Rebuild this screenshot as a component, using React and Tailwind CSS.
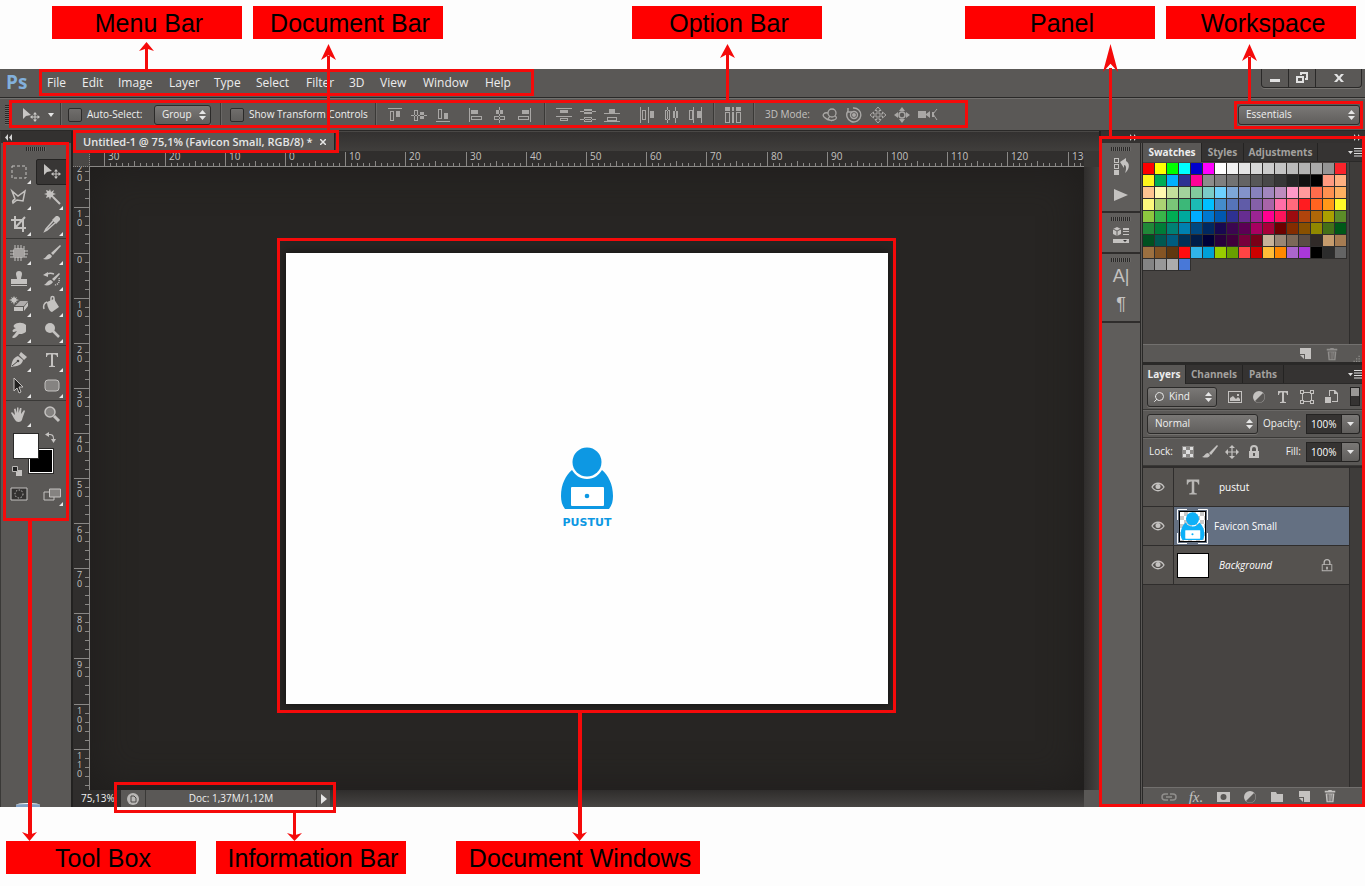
// src/App.jsx

import { clsx } from 'clsx';
import { Search } from 'lucide-react';

const MENUS = ['File', 'Edit', 'Image', 'Layer', 'Type', 'Select', 'Filter', '3D', 'View', 'Window', 'Help'];

const MENU_WIDTHS = {
  File: 'w-[35px]',
  Edit: 'w-[36px]',
  Image: 'w-[51px]',
  Layer: 'w-[45px]',
  Type: 'w-[42px]',
  Select: 'w-[50px]',
  Filter: 'w-[43px]',
  '3D': 'w-[31px]',
  View: 'w-[43px]',
  Window: 'w-[62px]',
  Help: 'w-[26px]',
};

const SWATCHES = [
  'ff0000 ffff00 00ff00 00ffff 0000cc ff00ff ffffff f2f2f2 e4e4e4 d8d8d8 cccccc c4c4c4 bbbbbb b2b2b2 aaaaaa 949494 fa232b',
  'fff51c 00ad56 00b0ff 2e3192 ff0096 8c8c8c 7f7f7f 727272 646464 575757 484848 373737 262626 111111 000000 ff9a80 ffb080',
  'ffc490 fff8b0 c4df9b a3d39c 82ca9c 7accc8 6dd0ff 7da7d9 8393ca 8781bd a186be bd8cbf ff9ac8 ff9a9c ff6c4c ff9050 ffb060',
  'fff87c acd373 7ac678 3cb878 1cbbb4 00c0ff 448ccb 5674b9 605ca8 8560a8 a864a8 ff6ea8 ff6a7c ff1c20 ff6420 ff9818 fffa28',
  '8dc73f 39b54a 00ad54 00a99d 00acff 0078d0 0058b0 2e3192 662d91 9c2492 ff0090 ff145c 9e0b0f b0440c b06808 aba000 5c8c28',
  '208838 007c38 008074 0080b0 004880 002860 180850 3c0650 5c0054 a80060 a80038 6c0000 842c00 885000 908800 447018 005818',
  '005020 005850 005c80 003058 001c48 000038 28003c 40003c 78003c 780018 c7b299 998675 7c6858 5a4c44 302a28 c69c6d a67c52',
  '9c7040 845424 603810 ff0c10 30b4e8 00a0d8 98cc00 68a000 ff4444 cc0000 ffbc38 ff8800 aa66cc aa38d8 000000 2c2c2c 646464',
  '848484 989898 acacac 4878d8',
].map((row) => row.split(' '));

function Icon({ size = 'size-4', box = 16, className, children }) {
  return (
    <svg
      viewBox={`0 0 ${box} ${box}`}
      className={clsx('shrink-0', size, className)}
      fill="currentColor"
      aria-hidden="true"
    >
      {children}
    </svg>
  );
}

/* ---------- callouts ---------- */

function Callout({ className, children }) {
  return (
    <div
      className={clsx(
        "h-[33px] shrink-0 bg-[#ff0000] pl-1 text-center font-['Liberation_Sans',Arial,sans-serif] text-[25px] leading-[34px] whitespace-nowrap text-black",
        className,
      )}
    >
      {children}
    </div>
  );
}

function Frame({ className }) {
  return <div className={clsx('pointer-events-none absolute z-20 border-3 border-[#f50a0a]', className)} />;
}

function Arrow({ className, head = 'h-3', line = 'w-[3px]', down = false }) {
  return (
    <div className={clsx('pointer-events-none absolute z-30 flex w-[15px] items-center', down ? 'flex-col-reverse' : 'flex-col', className)}>
      <svg viewBox="0 0 15 12" preserveAspectRatio="none" className={clsx('w-full shrink-0', head, down && 'rotate-180')}>
        <path d="M7.500 0 15 12 7.500 8.500 0 12Z" fill="#f50a0a" />
      </svg>
      <div className={clsx('grow bg-[#f50a0a]', down ? '-mb-1' : '-mt-1', line)} />
    </div>
  );
}

/* ---------- small controls ---------- */

function UpDown({ className }) {
  return (
    <svg viewBox="0 0 7 10" className={clsx('pointer-events-none absolute h-[10px] w-[7px]', className)} fill="#e6e6e6" aria-hidden="true">
      <path d="M3.500 0 7 4H0ZM3.500 10 0 6h7Z" />
    </svg>
  );
}

function Dropdown({ label, value, className, selectClass = 'pl-[7px]', children }) {
  return (
    <div className={clsx('relative h-5 shrink-0', className)}>
      {children}
      <select
        aria-label={label}
        defaultValue={value}
        className={clsx(
          'h-full w-full appearance-none rounded-[3px] border border-[#2b2a29] bg-linear-to-b from-[#7a7876] to-[#605e5c] text-[10px] text-[#f0f0f0] shadow-[0_1px_0_#74726f]',
          selectClass,
        )}
      >
        <option>{value}</option>
      </select>
      <UpDown className="top-[5px] right-[5px]" />
    </div>
  );
}

function Check({ id, children, className }) {
  return (
    <div className={clsx('flex shrink-0 items-center gap-[5px]', className)}>
      <input
        id={id}
        type="checkbox"
        className="size-[14px] shrink-0 appearance-none rounded-[2px] border border-[#2b2a29] bg-linear-to-b from-[#706e6c] to-[#605e5c]"
      />
      <label htmlFor={id} className="whitespace-nowrap">{children}</label>
    </div>
  );
}

function Grip({ className }) {
  return (
    <div
      className={clsx(
        'h-[4px] w-[20px] bg-[repeating-linear-gradient(to_right,#2a2928_0_1px,#6b6967_1px_2px)]',
        className,
      )}
    />
  );
}

function PercentField({ id, label }) {
  return (
    <div className="ml-auto flex items-center">
      <label htmlFor={id}>{label}</label>
      <input
        id={id}
        defaultValue="100%"
        className="ml-[5px] h-5 w-[36px] border border-[#242322] bg-[#353332] pl-1 text-[10px] text-white"
      />
      <button
        type="button"
        aria-label={`${label} slider`}
        className="flex h-5 w-[18px] items-center justify-center rounded-r-[3px] border border-l-0 border-[#242322] bg-linear-to-b from-[#7a7876] to-[#605e5c]"
      >
        <Icon size="size-[7px]" box={7} className="text-[#e6e6e6]"><path d="M0 2h7L3.500 6Z" /></Icon>
      </button>
    </div>
  );
}

/* ---------- top bars ---------- */

function MenuBar() {
  return (
    <header className="relative flex h-[29px] shrink-0 items-start border-b border-[#2a2928] bg-[#5a5856]">
      <span className="w-[47px] pl-[6px] text-[19px] leading-[26px] font-bold text-[#82b0dc]">Ps</span>
      <nav className="flex text-xs leading-[28px] text-[#ededed]">
        {MENUS.map((m) => (
          <button key={m} type="button" className={clsx('text-left whitespace-nowrap', MENU_WIDTHS[m])}>{m}</button>
        ))}
      </nav>
      <div className="mr-[3px] ml-auto flex h-[19px] overflow-hidden rounded-b-[4px] border border-t-0 border-[#2a2928] text-[#e2e2e2] shadow-[0_1px_0_#777572]">
        <button type="button" aria-label="Minimize" className="flex w-[27px] items-center justify-center border-r border-[#2a2928]">
          <Icon size="size-3" box={12}><path d="M1 7h10v3H1Z" /></Icon>
        </button>
        <button type="button" aria-label="Restore" className="flex w-[27px] items-center justify-center border-r border-[#2a2928]">
          <Icon size="size-3" box={12}>
            <path fillRule="evenodd" d="M4 0h8v8H9V6h1V2H6v1H4ZM0 4h8v7H0Zm2 2v3h4V6Z" />
          </Icon>
        </button>
        <button type="button" aria-label="Close" className="flex w-[45px] items-center justify-center">
          <Icon size="size-3" box={12}><path d="M1 2h3l2 2.500L8 2h3L7.500 6l3.500 4H8L6 7.500 4 10H1l3.500-4Z" /></Icon>
        </button>
      </div>
      <Frame className="top-0 left-[39px] h-[27px] w-[495px]" />
      <Arrow className="-top-[27px] left-[139px] h-[29px]" head="h-[9px]" />
    </header>
  );
}

const ALIGN = [
  [
    'M1 1h14v1H1ZM3 4h4v10H3Zm1 1v8h2V5ZM9 4h4v6H9Z',
    'M0 8h16v1H0ZM3 3h4v11H3Zm1 1v9h2V4ZM9 5h4v7H9Z',
    'M1 14h14v1H1ZM3 2h4v10H3Zm1 1v8h2V3ZM9 6h4v6H9Z',
  ],
  [
    'M1 1h1v14H1ZM3 3h7v4H3ZM3 9h11v4H3Zm1 1v2h9v-2Z',
    'M7 0h1v16H7ZM4 3h7v4H4ZM2 9h11v4H2Zm1 1v2h9v-2Z',
    'M14 1h1v14h-1ZM6 3h7v4H6ZM2 9h11v4H2Zm1 1v2h9v-2Z',
  ],
  [
    'M0 1h16v1H0ZM4 3h8v3H4ZM0 9h16v1H0ZM4 11h8v3H4Zm1 1v1h6v-1Z',
    'M0 4h16v1H0ZM4 2h8v5H4ZM0 12h16v1H0ZM4 10h8v5H4Zm1 1v3h6v-3Z',
    'M0 6h16v1H0ZM5 2h6v4H5ZM0 14h16v1H0ZM3 10h10v4H3Zm1 1v2h8v-2Z',
  ],
  [
    'M1 0h1v16H1ZM3 3h4v10H3Zm1 1v8h2V4ZM9 0h1v16H9ZM11 4h4v7h-4Z',
    'M4 0h1v16H4ZM2 3h5v10H2Zm1 1v8h3V4ZM12 0h1v16h-1ZM10 4h5v7h-5Z',
    'M6 0h1v16H6ZM2 3h4v10H2Zm1 1v8h2V4ZM14 0h1v16h-1ZM10 4h4v7h-4Z',
  ],
];

function AlignGroup({ paths }) {
  return (
    <div className="flex gap-2">
      {paths.map((d) => <Icon key={d}><path fillRule="evenodd" d={d} /></Icon>)}
    </div>
  );
}

function Sep({ className }) {
  return <span className={clsx('h-[27px] w-[2px] shrink-0 border-l border-[#3a3937] bg-[#6a6866]', className)} />;
}

function MovePath({ x = 0, y = 0 }) {
  return (
    <path
      transform={`translate(${x} ${y})`}
      d="M5 0 7 2.500H5.500v2h2V3L10 5 7.500 7V5.500h-2v2H7L5 10 3 7.500h1.500v-2h-2V7L0 5l2.500-2v1.500h2v-2H3Z"
    />
  );
}

function OptionBar() {
  return (
    <div className="relative flex h-[33px] shrink-0 items-center border-t border-b border-t-[#72706e] border-b-[#2a2928] bg-[#5a5856] text-[10px] text-[#f0f0f0]">
      <div className="ml-[5px] h-[20px] w-[4px] shrink-0 bg-[repeating-linear-gradient(to_bottom,#2a2928_0_1px,#6b6967_1px_2px)]" />
      <button type="button" aria-label="Move tool presets" className="ml-3 flex shrink-0 items-center gap-1 text-[#c9c7c5]">
        <svg viewBox="0 0 20 16" className="h-4 w-5" fill="currentColor" aria-hidden="true">
          <path d="M2 1v11l3-3 5-1Z" />
          <MovePath x={9} y={5} />
        </svg>
        <Icon size="size-3" box={12} className="text-[#e6e6e6]"><path d="M3 4h6L6 8Z" /></Icon>
      </button>
      <Sep className="ml-[3px]" />
      <Check id="auto-select" className="ml-[6px] w-[86px]">Auto-Select:</Check>
      <Dropdown label="Auto-select target" value="Group" className="w-[57px]" />
      <Sep className="ml-[9px]" />
      <Check id="transform-controls" className="ml-2 w-[137px]">Show Transform Controls</Check>
      <Sep className="ml-2" />
      <div className="ml-[10px] flex w-[145px] justify-between text-[#a9a7a5]">
        <AlignGroup paths={ALIGN[0]} />
        <AlignGroup paths={ALIGN[1]} />
      </div>
      <Sep className="ml-3" />
      <div className="ml-[10px] flex w-[147px] justify-between text-[#a9a7a5]">
        <AlignGroup paths={ALIGN[2]} />
        <AlignGroup paths={ALIGN[3]} />
      </div>
      <Sep className="ml-[10px]" />
      <Icon className="ml-[10px] text-[#a9a7a5]">
        <path fillRule="evenodd" d="M0 0h5v4H0ZM7 0h2v4H7ZM11 0h5v4h-5ZM0 5h5v11H0Zm1 1v9h3V6ZM7 5h2v11H7ZM11 5h5v11h-5Zm1 1v9h3V6Z" />
      </Icon>
      <Sep className="ml-3" />
      <span className="ml-[10px] w-[57px] whitespace-nowrap text-[#c4c2c0]">3D Mode:</span>
      <div className="flex gap-2 text-[#a9a7a5]">
        <Icon><g fill="none" stroke="currentColor" strokeWidth="1.3"><circle cx="10" cy="6" r="4" /><path d="M6 6C2 5 0 8 2 10s6 4 10 3c3-1 3-3 1-4M8 9l-2 3 4 2" /></g></Icon>
        <Icon><g fill="none" stroke="currentColor" strokeWidth="1.4"><path d="M2 4a7 7 0 1 0 5-3M2 1v4h4" /><circle cx="8" cy="8" r="3.500" /></g><circle cx="8" cy="8" r="2" /></Icon>
        <Icon><path fill="none" stroke="currentColor" d="m8 0 3 3.500H9V7h3.500V5L16 8l-3.500 3V9H9v3.500h2L8 16l-3-3.500h2V9H3.500v2L0 8l3.500-3v2H7V3.500H5Z" /></Icon>
        <Icon><circle cx="8" cy="8" r="3" fill="none" stroke="currentColor" strokeWidth="1.500" /><path d="m8 0 3 4H5ZM8 16l3-4H5ZM0 8l4-3v6ZM16 8l-4-3v6Z" /></Icon>
        <svg viewBox="0 0 20 16" className="h-4 w-5" fill="currentColor" aria-hidden="true">
          <path d="M0 4h8v7H0ZM8 7l4-3v7L8 8Z" /><path d="M19 2l-4 5 4 6" fill="none" stroke="currentColor" /><path d="M14 5h2v5h-2Z" />
        </svg>
      </div>
      <div className="grow" />
      <Dropdown label="Workspace" value="Essentials" className="mr-[5px] w-[122px]" />
      <Frame className="top-px left-[9px] h-[28px] w-[959px]" />
      <Frame className="top-[2px] right-[2px] h-[28px] w-[129px]" />
      <Arrow className="-top-[55px] left-[720px] h-[58px]" head="h-[14px]" />
      <Arrow className="-top-[55px] right-[108px] h-[58px]" head="h-[17px]" />
    </div>
  );
}

/* ---------- tool box ---------- */

const TOOL_GROUPS = [
  [
    { name: 'Rectangular Marquee', art: <path d="M3 4h14v12H3Z" fill="none" stroke="currentColor" strokeDasharray="3 2" /> },
    { name: 'Move', active: true, noFlyout: true, art: <><path d="M2 2v11l3-3 5-1Z" /><MovePath x={9} y={7} /></> },
    { name: 'Polygonal Lasso', art: <path d="m3 3 6 5 7-5-2 10-6-1-4 3c-1-2 0-3 2-4Z" fill="none" stroke="currentColor" strokeWidth="1.500" /> },
    { name: 'Magic Wand', art: <><path d="m8 1 1 3 3-2-1 3 3 1-3 1 1 3-3-1-1 3-1-3-3 1 1-3-3-1 3-1-1-3 3 1Z" /><path d="m11 9 7 7" fill="none" stroke="currentColor" strokeWidth="2" /></> },
    { name: 'Crop', art: <path d="M6 2v12h11M2 6h12v12M6 14 16 3" fill="none" stroke="currentColor" strokeWidth="2" /> },
    { name: 'Eyedropper', art: <><path d="m10 6 4-4h2l2 2v2l-4 4Z" /><path d="m11 7-7 8-1 2 2-1 8-7" fill="none" stroke="currentColor" strokeWidth="1.500" /></> },
  ],
  [
    { name: 'Patch', art: <><rect x="4" y="5" width="12" height="10" rx="3" opacity=".7" /><path d="M6 2v4m3-4v4m3-4v4m3-3v3M6 14v4m3-4v4m3-4v4M1 8h4m-4 3h4m-4 3h4M15 8h4m-4 3h4m-4 3h3" stroke="currentColor" /></> },
    { name: 'Brush', art: <><path d="M18 2 9 10l2 2 8-9Z" /><path d="M8 11c-3 0-3 3-7 5 4 1 8 0 9-3Z" /></> },
    { name: 'Clone Stamp', art: <path d="M10 2a3 3 0 0 1 3 3c0 2-1 3-1 5h6v5H2v-5h6c0-2-1-3-1-5a3 3 0 0 1 3-3ZM2 16h16v1H2Z" /> },
    { name: 'History Brush', art: <><path d="m17 4-7 6 2 2 6-7ZM9 11c-3 0-4 3-7 5 4 1 7 0 9-3Z" /><path d="M3 6c3-2 6-2 9-1" fill="none" stroke="currentColor" strokeWidth="1.500" /><path d="m1 6 5-3v5Z" /><path d="M17 9c1 4-1 7-5 7" fill="none" stroke="currentColor" strokeDasharray="1 1" strokeWidth="1.500" /></> },
    { name: 'Background Eraser', art: <><path d="m5 1 1 2 2-1-1 2 3 1-3 1 1 2-2-1-1 3-1-3-2 1 1-2-3-1 3-1-1-2 2 1Z" /><path d="m6 11 5-5h8l-4 5Z" opacity=".8" /><path d="M5 12h9v4H5ZM15 12l4-5v4l-4 5Z" /></> },
    { name: 'Paint Bucket', art: <><path d="m5 7 7-3 5 8-7 5c-2 0-5-5-5-10Z" /><path d="M9 8V3c0-2 3-2 3 0v5M5 7c-3 1-4 4-3 7" fill="none" stroke="currentColor" strokeWidth="1.500" /></> },
    { name: 'Smudge', art: <path d="M5 4c3-3 9-3 12 0v6c0 2-3 2-4 3h-3c-2 2-3 4-6 4-1 0-1-2 1-3l3-4-3 1c-2 0-2-2 0-3l2-1C5 7 4 5 5 4Z" /> },
    { name: 'Dodge', art: <><circle cx="8" cy="7" r="5" /><path d="m11 10 6 6" stroke="currentColor" strokeWidth="2.500" /></> },
  ],
  [
    { name: 'Pen', art: <><path d="M2 17C3 11 4 8 9 6l5 4c-1 5-5 6-12 7Z" /><path d="m10 5 2-3 6 5-3 3Z" /><path d="m3 16 6-5" stroke="#4a4846" /><circle cx="9" cy="11" r="1.300" fill="#4a4846" /></> },
    { name: 'Horizontal Type', art: <path d="M4 3h12v4h-1c0-2-1-2.500-4-2.500V15c0 1 1 1 2 1v1H7v-1c1 0 2 0 2-1V4.500C6 4.500 5 5 5 7H4Z" /> },
    { name: 'Path Selection', art: <path d="M5 2v13l3-3 2 5 2-1-2-5h4Z" fill="#222120" stroke="currentColor" /> },
    { name: 'Rounded Rectangle', art: <rect x="3" y="4" width="14" height="11" rx="3" fill="#858381" stroke="currentColor" /> },
  ],
  [
    { name: 'Hand', art: <path d="m2 8 1-1 3 3L5 4l1.500-.5L8 8V2.500h1.500V8L11 3h1.500L12 9l3-4 1 1-2.500 7c-.5 3-2 4-4 4-3 0-4-3-7.500-9Z" /> },
    { name: 'Zoom', noFlyout: true, art: <><circle cx="8" cy="7" r="5" fill="#858381" stroke="currentColor" strokeWidth="1.500" /><path d="m12 11 5 5" stroke="currentColor" strokeWidth="3" /></> },
  ],
];

function Tool({ tool }) {
  return (
    <button
      type="button"
      aria-label={tool.name}
      className={clsx(
        'relative flex h-[26px] items-center justify-center text-[#c4c2c0]',
        tool.active && 'rounded-[2px] border border-[#242322] bg-[#383635]',
      )}
    >
      <Icon size="size-5" box={20}>{tool.art}</Icon>
      {!tool.noFlyout && (
        <svg viewBox="0 0 4 4" className="absolute right-[5px] bottom-px size-1" fill="#e6e6e6" aria-hidden="true"><path d="M4 0v4H0Z" /></svg>
      )}
    </button>
  );
}

function ToolBox() {
  return (
    <aside className="relative flex w-[73px] shrink-0 flex-col border-r-2 border-l border-r-[#222120] border-l-[#3a3937] bg-[#5a5856]">
      <div className="flex h-3 items-center bg-[#333130] pl-1">
        <Icon size="size-[7px]" box={7} className="text-[#d4d4d4]"><path d="M3 0v7L0 3.500ZM7 0v7L4 3.500Z" /></Icon>
      </div>
      <Grip className="mt-1 mb-[7px] ml-[25px]" />
      {TOOL_GROUPS.map((group, g) => (
        <div
          key={g}
          className={clsx('mr-[3px] ml-[2px] grid grid-cols-2 pt-px pb-px', g < TOOL_GROUPS.length - 1 && 'border-b border-[#3a3937]')}
        >
          {group.map((t) => <Tool key={t.name} tool={t} />)}
        </div>
      ))}
      <div className="relative mt-1 ml-[10px] h-[48px] w-[48px]">
        <button type="button" aria-label="Background color" className="absolute top-4 left-[18px] size-6 border border-white bg-black outline outline-[#2a2928]" />
        <button type="button" aria-label="Foreground color" className="absolute top-0 left-[2px] size-[26px] border border-[#2a2928] bg-white" />
        <Icon size="size-3" box={12} className="absolute -top-px right-[2px] text-[#c4c2c0]">
          <path d="M4 0v2c4 0 5 1 5 5h2L8.500 11 6 7h2c0-3-1-4-4-4v2L0 2.500Z" />
        </Icon>
        <Icon size="size-3" box={12} className="absolute bottom-1 left-0 text-[#c4c2c0]">
          <path d="M5 5h6v6H5Z" /><path d="M1.500 1.500h5v5h-5Z" fill="#222" stroke="#b9b7b5" />
        </Icon>
      </div>
      <div className="mr-[3px] ml-[2px] grid grid-cols-2 text-[#c4c2c0]">
        <button type="button" aria-label="Quick mask" className="flex h-[26px] items-center justify-center">
          <Icon size="size-5" box={20}>
            <path d="M2 4h16v12H2Z" fill="#333130" stroke="currentColor" />
            <circle cx="10" cy="10" r="4" fill="none" stroke="currentColor" strokeDasharray="1.500 1.500" />
          </Icon>
        </button>
        <Tool tool={{ name: 'Screen mode', art: <><path d="M2 8h10v8H2Z" fill="#5a5856" stroke="currentColor" /><path d="M7.500 5h11v8h-11Z" fill="#858381" stroke="currentColor" /></> }} />
      </div>
      <div className="absolute bottom-0 left-[15px] h-1 w-6 rounded-t-[50%] border-t border-white bg-[#7f9fc4]" />
      <Frame className="top-[11px] left-[2px] h-[379px] w-[66px]" />
      <Arrow down className="top-[388px] -bottom-[34px] left-[21px]" head="h-[9px]" line="w-[4px]" />
    </aside>
  );
}

/* ---------- document ---------- */

const marks = (from, to) => Array.from({ length: (to - from) / 10 + 1 }, (_, i) => from + i * 10);

// Both rulers are centred on the 50 mark, as the canvas is.
function HorizontalRuler() {
  const unit = 6.02;
  return (
    <div className="flex h-4 grow justify-center overflow-hidden border-b border-[#8a8886] bg-[#302e2d]">
      <svg width="1200" height="16" className="shrink-0" aria-hidden="true">
        {marks(-30, 130).map((v) => {
          const x = Math.round(600 + (v - 50) * unit) - 1;
          return (
            <g key={v}>
              {Array.from({ length: 9 }, (_, i) => (
                <path key={i} d={`M${Math.round(x + (i + 1) * unit) + 0.5} ${i === 4 ? 10 : 12}V16`} stroke="#8a8886" />
              ))}
              <path d={`M${x + 0.5} 1V16`} stroke="#8a8886" />
              <text x={x + 4} y="9" fontSize="10" fill="#c4c2c0">{Math.abs(v)}</text>
            </g>
          );
        })}
      </svg>
    </div>
  );
}

function VerticalRuler() {
  const unit = 4.51;
  return (
    <div className="flex w-[17px] shrink-0 flex-col justify-center overflow-hidden border-r border-[#8a8886] bg-[#302e2d]">
      <svg width="17" height="800" className="shrink-0" aria-hidden="true">
        {marks(-20, 110).map((v) => {
          const y = Math.round(400 + (v - 50) * unit) - 1;
          return (
            <g key={v}>
              {[1, 2, 3, 4].map((i) => (
                <path key={i} d={`M12 ${Math.round(y + i * 2 * unit) + 0.5}H17`} stroke="#8a8886" />
              ))}
              <path d={`M1 ${y + 0.5}H17`} stroke="#8a8886" />
              {String(Math.abs(v)).split('').map((c, i) => (
                <text key={i} x="4" y={y + 10 + i * 9} fontSize="9" fill="#c4c2c0">{c}</text>
              ))}
            </g>
          );
        })}
      </svg>
    </div>
  );
}

function Figure({ className, color }) {
  return (
    <svg viewBox="0 0 54 64" className={className} aria-hidden="true">
      <path d="M12 23C6 28 1 37 1 49c0 5 1 9 4 13h44c3-4 4-8 4-13 0-12-5-21-11-26-3 5-8 9-15 9s-12-4-15-9Z" fill={color} />
      <circle cx="27" cy="15" r="14.500" fill={color} />
      <rect x="11" y="40" width="33" height="19" rx="1" fill="#fff" />
      <circle cx="27" cy="49" r="2.300" fill={color} />
    </svg>
  );
}

function DocumentArea() {
  return (
    <main className="flex min-w-0 grow flex-col bg-[#272523]">
      <div className="relative flex h-5 shrink-0 border-t border-[#4a4846] bg-linear-to-b from-[#333130] to-[#403e3c]">
        <div className="mt-px ml-[3px] flex h-[18px] w-[259px] items-center border-r border-[#222120] bg-[#5a5856] pl-[7px] text-[11px] font-semibold text-[#e6e6e6]">
          <span className="whitespace-nowrap">Untitled-1 @ 75,1% (Favicon Small, RGB/8) *</span>
          <button type="button" aria-label="Close document" className="mr-1 ml-auto p-1">
            <Icon size="size-[6px]" box={6}><path d="m0 0 6 6M6 0 0 6" stroke="currentColor" strokeWidth="1.500" /></Icon>
          </button>
        </div>
        <Frame className="-top-[2px] left-0 h-[23px] w-[266px]" />
        <Arrow className="-top-[88px] left-[248px] h-[88px]" head="h-4" />
      </div>
      <div className="flex shrink-0">
        <div className="w-[17px] shrink-0 border-r border-b border-dotted border-[#8a8886] bg-[#4a4846]" />
        <HorizontalRuler />
        <div className="w-[15px] shrink-0 bg-[#3a3836]" />
      </div>
      <div className="flex min-h-[560px] grow basis-0">
        <VerticalRuler />
        <section className="flex grow items-center justify-center bg-[#272523] shadow-[inset_0_0_40px_#1f1d1c]">
          <div className="relative flex h-[451px] w-[602px] shrink-0 flex-col items-center bg-[#fefefe] pt-[194px] shadow-[0_0_8px_#111]">
            <Figure className="h-[64px] w-[54px]" color="#0d98e3" />
            <span className="mt-[6px] font-['DejaVu_Sans',sans-serif] text-[11px] leading-[12px] font-bold text-[#0d98e3]">PUSTUT</span>
            <Frame className="-top-[15px] -left-[9px] h-[475px] w-[619px]" />
          </div>
        </section>
        <div className="w-[15px] shrink-0 bg-linear-to-r from-[#2f2d2c] to-[#454341]" />
      </div>
      <div className="relative flex h-[17px] shrink-0 items-stretch bg-linear-to-b from-[#2f2d2c] to-[#474543] text-[10px] text-[#f0f0f0]">
        <input aria-label="Zoom level" defaultValue="75,13%" className="w-[48px] bg-[#2f2d2c] pl-2 text-[10px]" />
        <button type="button" aria-label="Status source" className="flex w-[25px] items-center justify-center border-r border-[#3a3937] bg-[#5a5856]">
          <Icon size="size-3" box={12} className="text-[#b9b7b5]">
            <circle cx="6" cy="6" r="6" /><path d="M4 9V3h3l2 2v4Z" fill="none" stroke="#4a4846" />
          </Icon>
        </button>
        <div className="w-[170px] bg-[#5a5856] text-center leading-[17px]">Doc: 1,37M/1,12M</div>
        <button type="button" aria-label="Status options" className="flex w-[14px] items-center justify-center border-l border-[#3a3937] bg-[#5a5856]">
          <Icon size="size-[10px]" box={10} className="text-[#e6e6e6]"><path d="m2 0 6 5-6 5Z" /></Icon>
        </button>
        <div className="ml-auto w-[15px] bg-[#5a5856]" />
        <Frame className="-top-2 left-[41px] h-[31px] w-[222px]" />
        <Arrow down className="top-[21px] -bottom-[34px] left-[214px]" head="h-2" />
        <Arrow down className="-top-[78px] -bottom-[34px] left-[499px]" head="h-[9px]" line="w-[4px]" />
      </div>
    </main>
  );
}

/* ---------- panels ---------- */

const NEW_ICON = <path d="M3 2h11v11H8V8H3ZM3 9h4v4Z" />;
const TRASH_ICON = <path d="M6 1h4v1h4v2H2V2h4ZM3 5h10l-1 10H4ZM5 6l.5 8h1V6Zm2.500 0v8h1V6ZM10 6l-.5 8h1l.5-8Z" fillRule="evenodd" />;

function Dock() {
  const group = 'flex flex-col items-center border-b-2 border-[#2f2d2c] text-[#c4c2c0]';
  const glyph = "font-['Liberation_Sans',Arial,sans-serif] text-[18px] leading-[20px]";
  return (
    <div className="flex w-[40px] shrink-0 flex-col border-x border-[#2a2928] bg-[#5f5d5b]">
      <div className={clsx(group, 'h-[70px] gap-[10px] pt-1')}>
        <Grip />
        <button type="button" aria-label="History" className="-mt-1">
          <Icon size="size-5" box={20}>
            <path fillRule="evenodd" d="M3 1h5v5H3Zm1 1v3h3V2ZM3 7h5v5H3Zm1 1v3h3V8ZM3 13h5v5H3ZM9 5l6-4v3c4 2 4 8-1 12 2-5 1-8-1-8v3Z" />
          </Icon>
        </button>
        <button type="button" aria-label="Actions">
          <Icon><path d="m1 2 14 6-14 6Z" /></Icon>
        </button>
      </div>
      <div className={clsx(group, 'h-[41px] gap-[6px] pt-1')}>
        <Grip />
        <button type="button" aria-label="Properties">
          <Icon>
            <path d="m4 0 4 2v5L4 9 0 7V2ZM10 1h6v2h-6ZM10 4h6v1h-6ZM10 7h6v1h-6ZM0 12h16v4H0Z" />
            <path d="m0 2 4 2 4-2M4 4v5" fill="none" stroke="#5f5d5b" /><path d="M10 13h4l-2 2Z" fill="#333" />
          </Icon>
        </button>
      </div>
      <div className={clsx(group, 'h-[69px] gap-2 pt-1')}>
        <Grip />
        <button type="button" aria-label="Character" className={clsx(glyph, '-mt-1')}>A|</button>
        <button type="button" aria-label="Paragraph" className={glyph}>¶</button>
      </div>
    </div>
  );
}

function TabStrip({ tabs }) {
  return (
    <div className="flex h-[19px] shrink-0 border-b border-[#2a2928] bg-[#353332] text-[10px] font-bold">
      <div className="flex" role="tablist">
        {tabs.map(({ name, width }, i) => (
          <button
            key={name}
            type="button"
            role="tab"
            aria-selected={i === 0}
            className={clsx(
              'border-r border-[#242322] text-center whitespace-nowrap',
              width,
              i === 0 ? '-mb-px bg-[#5a5856] text-[#ededed]' : 'text-[#a3a19f]',
            )}
          >
            {name}
          </button>
        ))}
      </div>
      <button type="button" aria-label="Panel menu" className="mr-px ml-auto">
        <svg viewBox="0 0 16 9" className="h-[9px] w-4" fill="#dedede" aria-hidden="true">
          <path d="M0 3h5L2.500 6ZM6 0h10v1H6ZM6 2.500h10v1H6ZM6 5h10v1H6ZM6 7.500h10v1H6Z" />
        </svg>
      </button>
    </div>
  );
}

function SwatchesPanel() {
  return (
    <section className="flex h-[222px] shrink-0 flex-col border-b-3 border-[#2a2928]">
      <TabStrip tabs={[{ name: 'Swatches', width: 'w-[59px]' }, { name: 'Styles', width: 'w-[42px]' }, { name: 'Adjustments', width: 'w-[74px]' }]} />
      <div className="flex grow">
        <div className="grow bg-[#484543] pt-px">
          {SWATCHES.map((row, r) => (
            <div key={r} className="flex h-3">
              {row.map((c, i) => (
                <button
                  key={i}
                  type="button"
                  aria-label={`#${c}`}
                  className="size-3 border-r border-b border-[#302e2d]"
                  style={{ backgroundColor: `#${c}` }}
                />
              ))}
            </div>
          ))}
        </div>
        <div className="w-4 border-l border-[#2f2d2c] bg-[#3e3c3a]" />
      </div>
      <div className="flex h-[18px] items-center justify-end gap-3 border-t border-[#72706e] pr-1 text-[#c4c2c0]">
        <button type="button" aria-label="New swatch"><Icon>{NEW_ICON}</Icon></button>
        <button type="button" aria-label="Delete swatch" className="text-[#908e8c]"><Icon size="size-[14px]">{TRASH_ICON}</Icon></button>
        <Icon size="size-[10px]" className="self-end text-[#908e8c]"><path d="M14 6v2h-2V6ZM14 10v2h-2v-2ZM10 10v2H8v-2ZM14 14v2h-2v-2ZM10 14v2H8v-2ZM6 14v2H4v-2Z" /></Icon>
      </div>
    </section>
  );
}

const FILTERS = [
  { name: 'Pixel layers', art: <path fillRule="evenodd" d="M1 2h14v12H1Zm1 1v10h12V3Zm1 9V9l3-2 3 3 2-2 2 2v2Zm7-7h2v2h-2Z" /> },
  { name: 'Adjustment layers', art: <path fillRule="evenodd" d="M8 2a6 6 0 1 1 0 12A6 6 0 0 1 8 2ZM4 12a5 5 0 0 0 8-8Z" /> },
  { name: 'Type layers', art: <path d="M3 2h10v4h-1c0-2-1-2.500-3-2.500V12c0 1 1 1 2 1v1H5v-1c1 0 2 0 2-1V3.500C5 3.500 4 4 4 6H3Z" /> },
  { name: 'Shape layers', art: <path fillRule="evenodd" d="M1 1h4v2h6V1h4v4h-2v6h2v4h-4v-2H5v2H1v-4h2V5H1Zm1 1v2h2V2Zm10 0v2h2V2ZM4 5v6h1v1h6v-1h1V5h-1V4H5v1ZM2 12v2h2v-2Zm10 0v2h2v-2Z" /> },
  { name: 'Smart objects', art: <path fillRule="evenodd" d="M6 1h6l3 3v9H9v-1h5V5h-3V2H7v5H6ZM2 8h6v6H2Z" /> },
];

function LayerRow({ name, active, children, locked, italic }) {
  return (
    <li className={clsx('flex h-[39px] items-stretch border-b border-[#2f2d2c]', active ? 'bg-[#647082]' : 'bg-[#55524f]')}>
      <button type="button" aria-label={`Toggle ${name}`} className="flex w-[31px] items-center justify-center border-r border-[#2f2d2c] bg-[#55524f] text-[#c4c2c0]">
        <Icon size="size-[14px]" box={14}>
          <path d="M1 7c3-5 9-5 12 0-3 5-9 5-12 0Z" fill="none" stroke="currentColor" strokeWidth="1.300" />
          <circle cx="7" cy="6.500" r="2.500" />
        </Icon>
      </button>
      <div className="flex w-[37px] items-center justify-center">{children}</div>
      <button type="button" className={clsx('text-left text-[10px] text-white', active ? 'pl-[3px]' : 'pl-2', italic && 'italic')}>{name}</button>
      {locked && (
        <Icon size="size-[14px]" className="mr-[15px] ml-auto self-center text-[#b9b7b5]">
          <path fillRule="evenodd" d="M4 7V5a4 4 0 0 1 8 0v2h2v8H2V7Zm1.500 0h5V5a2.500 2.500 0 0 0-5 0ZM3 8v6h10V8Zm4 2h2v3H7Z" />
        </Icon>
      )}
    </li>
  );
}

function LayersPanel() {
  const row = 'flex shrink-0 items-center border-b border-[#3a3937] pr-[5px] text-[10px] text-[#f0f0f0] shadow-[0_1px_0_#6a6866]';
  return (
    <section className="flex grow flex-col">
      <TabStrip tabs={[{ name: 'Layers', width: 'w-[43px]' }, { name: 'Channels', width: 'w-[57px]' }, { name: 'Paths', width: 'w-[41px]' }]} />
      <div className={clsx(row, 'h-[26px] pl-1')}>
        <Dropdown label="Filter type" value="Kind" className="w-[70px]" selectClass="pl-[21px]">
          <Search className="pointer-events-none absolute top-1 left-[6px] z-10 size-3 -scale-x-100 text-[#e6e6e6]" />
        </Dropdown>
        <div className="ml-[10px] flex gap-2 text-[#c4c2c0]">
          {FILTERS.map((f) => (
            <button key={f.name} type="button" aria-label={f.name}><Icon>{f.art}</Icon></button>
          ))}
        </div>
        <button type="button" aria-label="Toggle filtering" className="ml-auto h-[19px] w-[10px] border border-[#242322] bg-linear-to-b from-[#9a9896] from-50% to-[#353332] to-50%" />
      </div>
      <div className={clsx(row, 'h-[28px] pl-1')}>
        <Dropdown label="Blend mode" value="Normal" className="w-[111px]" />
        <PercentField id="opacity" label="Opacity:" />
      </div>
      <div className={clsx(row, 'h-[28px] pl-[6px]')}>
        <span className="w-[31px]">Lock:</span>
        <div className="flex gap-[6px] text-[#c4c2c0]">
          <button type="button" aria-label="Lock transparent pixels">
            <Icon><path d="M2 2h12v12H2Z" fill="#8a8886" /><path d="M3 3h3v3H3ZM10 3h3v3h-3ZM6 6h4v4H6ZM3 10h3v3H3ZM10 10h3v3h-3Z" fill="#dedede" /></Icon>
          </button>
          <button type="button" aria-label="Lock image pixels">
            <Icon><path d="m15 1-8 8 2 2 7-9ZM6 9c-3 0-3 3-6 4 4 1 7 1 8-2Z" /></Icon>
          </button>
          <button type="button" aria-label="Lock position">
            <Icon><path d="m8 1 3 3H8.600v3.400H12V5l3 3-3 3V8.600H8.600V12H11l-3 3-3-3h2.400V8.600H4V11L1 8l3-3v2.400h3.400V4H5Z" /></Icon>
          </button>
          <button type="button" aria-label="Lock all">
            <Icon><path fillRule="evenodd" d="M4 7V5a4 4 0 0 1 8 0v2h1v7H3V7Zm2 0h4V5a2 2 0 0 0-4 0Zm1 2v3h2V9Z" /></Icon>
          </button>
        </div>
        <PercentField id="fill" label="Fill:" />
      </div>
      <div className="flex min-h-[160px] grow border-t-2 border-[#2f2d2c]">
        <ul className="grow bg-[#474442]">
          <LayerRow name="pustut">
            <Icon size="size-5" className="text-[#b9b7b5]">{FILTERS[2].art}</Icon>
          </LayerRow>
          <LayerRow name="Favicon Small" active>
            <div className="relative flex h-[35px] w-[31px] items-center justify-center">
              <div className="flex h-[31px] w-[27px] shrink-0 items-end justify-center border border-black bg-[conic-gradient(#c9c9c9_25%,#fff_0_50%,#c9c9c9_0_75%,#fff_0)] bg-[length:8px_8px]">
                <Figure className="h-[29px] w-[25px]" color="#0db0f8" />
              </div>
              <svg viewBox="0 0 31 35" className="absolute inset-0 h-[35px] w-[31px]" fill="none" stroke="#fff" aria-hidden="true">
                <path d="M.5 11V.5H10M21 .5h9.500V11M30.500 24v10.500H21M10 34.500H.5V24" />
              </svg>
            </div>
          </LayerRow>
          <LayerRow name="Background" italic locked>
            <div className="h-[25px] w-[32px] border border-black bg-white" />
          </LayerRow>
        </ul>
        <div className="w-4 border-l border-[#2f2d2c] bg-[#3e3c3a]" />
      </div>
      <div className="flex h-[20px] shrink-0 items-start gap-[11px] border-t border-[#72706e] pt-px pl-[18px] text-[#c4c2c0]">
        <button type="button" aria-label="Link layers" className="text-[#908e8c]">
          <Icon><g fill="none" stroke="currentColor" strokeWidth="1.500"><path d="M7 11H4a3 3 0 0 1 0-6h3M9 5h3a3 3 0 0 1 0 6H9M5 8h6" /></g></Icon>
        </button>
        <button type="button" aria-label="Layer style" className="w-4 font-['Liberation_Serif',serif] text-[15px] leading-4 italic">fx.</button>
        <button type="button" aria-label="Add mask"><Icon><path fillRule="evenodd" d="M2 3h13v10H2Zm6.500 2a3 3 0 1 0 0 6 3 3 0 0 0 0-6Z" /></Icon></button>
        <button type="button" aria-label="Adjustment layer"><Icon>{FILTERS[1].art}</Icon></button>
        <button type="button" aria-label="New group"><Icon><path d="M2 3h5l1 2h6v8H2Z" /></Icon></button>
        <button type="button" aria-label="New layer"><Icon>{NEW_ICON}</Icon></button>
        <button type="button" aria-label="Delete layer"><Icon size="size-[14px]">{TRASH_ICON}</Icon></button>
      </div>
    </section>
  );
}

function PanelArea() {
  const collapse = <Icon size="size-[7px]" box={7} className="text-[#d4d4d4]"><path d="M0 0v7l3-3.500ZM4 0v7l3-3.500Z" /></Icon>;
  return (
    <aside className="relative flex w-[266px] shrink-0 flex-col border-l-2 border-[#222120] bg-[#5a5856]">
      <div className="flex h-3 shrink-0 items-center justify-between bg-[#333130] pr-1 pl-[29px]">
        {collapse}
        {collapse}
      </div>
      <div className="flex grow">
        <Dock />
        <div className="ml-px flex grow flex-col border-l border-[#2a2928]">
          <SwatchesPanel />
          <LayersPanel />
        </div>
      </div>
      <Frame className="top-[5px] right-0 bottom-0 -left-[2px]" />
      <Arrow className="-top-[87px] left-[2px] h-[94px]" head="h-[28px]" />
    </aside>
  );
}

export default function App() {
  return (
    <div className="flex min-h-screen w-full flex-col bg-[#fdfdfd] font-['Open_Sans','Noto_Sans',sans-serif]">
      <div className="flex h-[69px] shrink-0 pt-[6px] pr-[9px] pl-[52px]">
        <Callout className="w-[190px]">Menu Bar</Callout>
        <Callout className="ml-[11px] w-[190px]">Document Bar</Callout>
        <Callout className="ml-[189px] w-[190px]">Option Bar</Callout>
        <Callout className="ml-auto w-[190px]">Panel</Callout>
        <Callout className="ml-[11px] w-[190px]">Workspace</Callout>
      </div>
      <div className="flex grow flex-col">
        <MenuBar />
        <OptionBar />
        <div className="flex grow">
          <ToolBox />
          <DocumentArea />
          <PanelArea />
        </div>
      </div>
      <div className="flex h-[79px] shrink-0 pt-[34px] pl-[6px]">
        <Callout className="w-[190px]">Tool Box</Callout>
        <Callout className="ml-5 w-[190px]">Information Bar</Callout>
        <Callout className="ml-[50px] w-[244px]">Document Windows</Callout>
      </div>
    </div>
  );
}
